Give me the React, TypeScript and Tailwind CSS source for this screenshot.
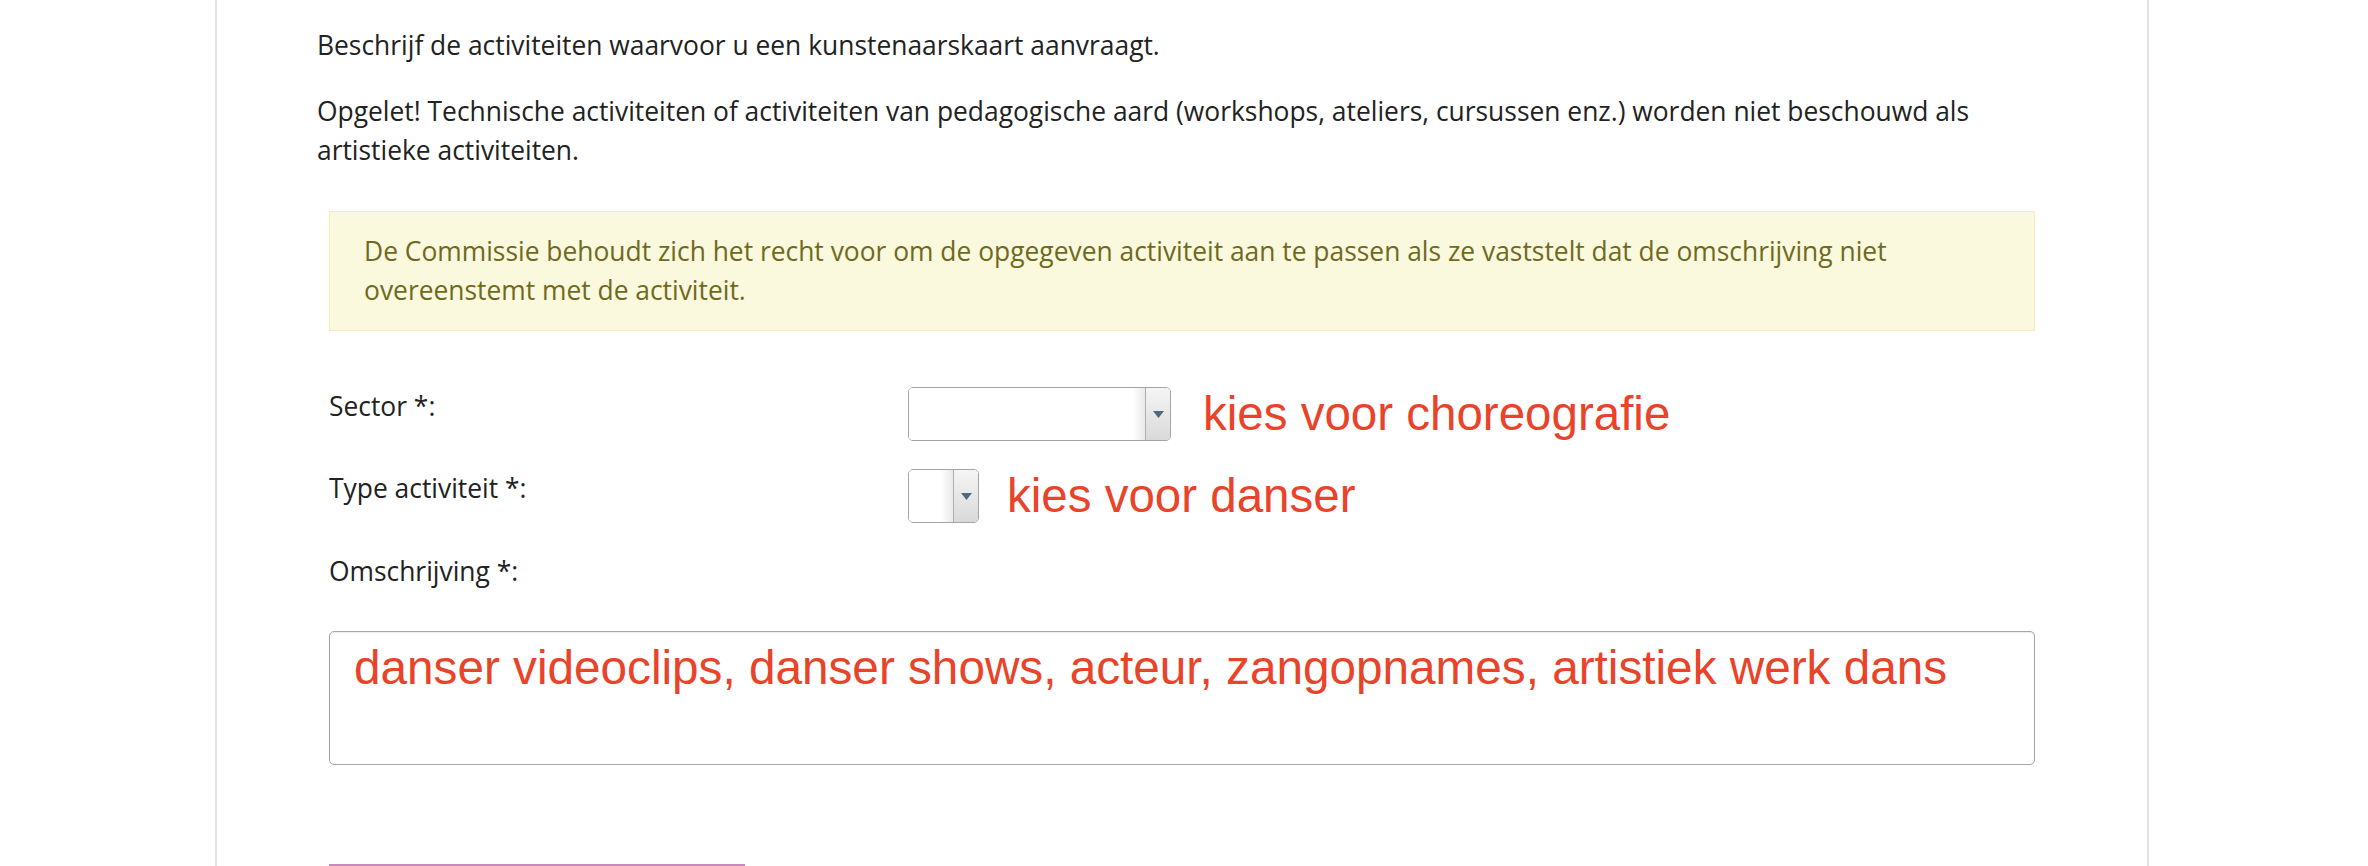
import React from 'react';

function FakeSelect({ width }: { width: string }) {
  return (
    <div className={`flex h-[54px] ${width} shrink-0 overflow-hidden rounded-[5px] border border-[#a4a4a4] bg-white`}>
      <div className="flex-1 bg-[linear-gradient(to_right,#ffffff_0%,#ffffff_calc(100%-12px),#e9e9e9_100%)]" />
      <div className="flex w-[25px] items-center justify-center border-l border-[#b0b0b0] bg-[linear-gradient(to_bottom,#f5f5f5,#d9d9d9)]">
        <svg width="11" height="7" viewBox="0 0 11 7">
          <path d="M0 0 L11 0 L5.5 7 Z" fill="#4b6a80" />
        </svg>
      </div>
    </div>
  );
}

export default function App() {
  return (
    <div className="h-[866px] w-full overflow-hidden bg-white font-['Open_Sans',sans-serif] text-[26.4px] leading-[39px] text-[#222222]">
      <div className="ml-[215px] h-full w-[1934px] border-x-2 border-[#e2e2e2] px-[100px] pt-[26px]">
        <p>Beschrijf de activiteiten waarvoor u een kunstenaarskaart aanvraagt.</p>
        <p className="mt-[27px]">
          Opgelet! Technische activiteiten of activiteiten van pedagogische aard (workshops, ateliers, cursussen enz.) worden niet beschouwd als artistieke activiteiten.
        </p>

        <div className="mx-[12px] mt-[41px]">
          <div className="border border-[#f2eec4] bg-[#faf8dd] px-[34px] py-[20px] text-[#6e6a1e]">
            De Commissie behoudt zich het recht voor om de opgegeven activiteit aan te passen als ze vaststelt dat de omschrijving niet overeenstemt met de activiteit.
          </div>

          <div className="mt-[56px] flex items-start">
            <div className="w-[579px] shrink-0">Sector *:</div>
            <div className="flex items-center gap-[32px]">
              <FakeSelect width="w-[263px]" />
              <span className="font-['Liberation_Sans',Arial,sans-serif] text-[47.5px] leading-[54px] text-[#e9432a]">
                kies voor choreografie
              </span>
            </div>
          </div>

          <div className="mt-[28px] flex items-start">
            <div className="w-[579px] shrink-0">Type activiteit *:</div>
            <div className="flex items-center gap-[28px]">
              <FakeSelect width="w-[71px]" />
              <span className="font-['Liberation_Sans',Arial,sans-serif] text-[47.5px] leading-[54px] text-[#e9432a]">
                kies voor danser
              </span>
            </div>
          </div>

          <div className="mt-[29px]">Omschrijving *:</div>

          <div className="mt-[40px] h-[134px] rounded-[5px] border border-[#a6a6a6] px-[24px] pt-[8px] font-['Liberation_Sans',Arial,sans-serif] text-[47.7px] leading-[55px] text-[#e9432a] shadow-[inset_0_1px_1px_rgba(0,0,0,0.08)]">
            danser videoclips, danser shows, acteur, zangopnames, artistiek werk dans
          </div>

          <div className="mt-[99px] h-[40px] w-[416px] border-t-2 border-[#c98ab9]" />
        </div>
      </div>
    </div>
  );
}
